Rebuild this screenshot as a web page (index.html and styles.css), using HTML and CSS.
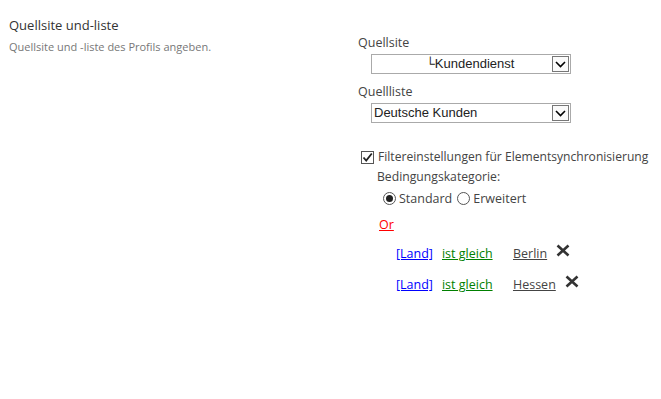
FILE: index.html
```html
<html>

<head>
    <title>Quellsite und-liste</title>
    <meta name="viewport" content="width=device-width, initial-scale=1.0">
    <link rel="stylesheet" href="styles.css">
</head>

<body>
    <div id="section">
        <div id="intro">
            <h3 class="title">Quellsite und-liste</h3>
            <div class="desc">Quellsite und -liste des Profils angeben.</div>
        </div>
        <div id="fields">
            <div class="label">Quellsite</div>
            <div class="select">
                <span class="value centered">&#9492;Kundendienst</span>
                <span class="arrow"><svg width="11" height="7" viewBox="0 0 11 7"><path d="M1 1 L5.5 5.5 L10 1" fill="none" stroke="#000" stroke-width="1.6"/></svg></span>
            </div>
            <div class="label">Quellliste</div>
            <div class="select">
                <span class="value">Deutsche Kunden</span>
                <span class="arrow"><svg width="11" height="7" viewBox="0 0 11 7"><path d="M1 1 L5.5 5.5 L10 1" fill="none" stroke="#000" stroke-width="1.6"/></svg></span>
            </div>

            <div class="check-row">
                <span class="checkbox"><svg width="11" height="11" viewBox="0 0 11 11"><path d="M1.5 5.5 L4.2 8.5 L9.8 1.5" fill="none" stroke="#222" stroke-width="1.8"/></svg></span>
                <span>Filtereinstellungen für Elementsynchronisierung</span>
            </div>
            <div class="filter">
                <div class="cat">Bedingungskategorie:</div>
                <div class="radios">
                    <span class="radio on"></span><span class="radio-label">Standard</span>
                    <span class="radio"></span><span class="radio-label">Erweitert</span>
                </div>
                <a class="or" href="#">Or</a>
                <div class="rules">
                    <div class="rule">
                        <a class="field" href="#">[Land]</a>
                        <a class="op" href="#">ist gleich</a>
                        <a class="val" href="#">Berlin</a>
                        <span class="del"><svg width="14" height="13" viewBox="0 0 14 13"><path d="M1.5 1.5 L12.5 11.5 M12.5 1.5 L1.5 11.5" stroke="#333" stroke-width="2.6"/></svg></span>
                    </div>
                    <div class="rule">
                        <a class="field" href="#">[Land]</a>
                        <a class="op" href="#">ist gleich</a>
                        <a class="val" href="#">Hessen</a>
                        <span class="del"><svg width="14" height="13" viewBox="0 0 14 13"><path d="M1.5 1.5 L12.5 11.5 M12.5 1.5 L1.5 11.5" stroke="#333" stroke-width="2.6"/></svg></span>
                    </div>
                </div>
            </div>
        </div>
    </div>
</body>

</html>
```

FILE: styles.css
```css
body {
    margin: 0;
    font-family: "Open Sans", "Noto Sans", sans-serif;
    font-size: 12px;
    color: #444;
    background: white;
}

#section {
    display: flex;
}

#intro {
    width: 349px;
    padding: 15px 0 0 9px;
}

.title {
    margin: 0;
    font-size: 13px;
    font-weight: normal;
    color: #333;
    line-height: 20px;
}

.desc {
    margin-top: 4px;
    font-size: 11px;
    color: #777;
    line-height: 16px;
}

#fields {
    padding-top: 33px;
}

.label {
    line-height: 20px;
    font-size: 12.5px;
}

.select {
    display: flex;
    width: 198px;
    height: 18px;
    margin: 1px 0 8px 13px;
    border: 1px solid #aaa;
    font-family: "Liberation Sans", Arial, sans-serif;
    font-size: 13px;
    color: #222;
}

.value {
    flex: 1;
    line-height: 18px;
    padding-left: 2px;
}

.value.centered {
    text-align: center;
    padding-left: 16px;
}

.arrow {
    width: 15px;
    margin: 1px 1px 1px 0;
    border: 1px solid #777;
    display: flex;
    align-items: center;
    justify-content: center;
    background: #fafafa;
}

.check-row {
    display: flex;
    align-items: center;
    margin-top: 24px;
    margin-left: 3px;
    line-height: 20px;
    font-size: 12.1px;
}

.checkbox {
    width: 11px;
    height: 11px;
    border: 1px solid #555;
    margin-right: 4px;
    display: flex;
}

.filter {
    padding-left: 19px;
    font-size: 12.5px;
}

.cat {
    line-height: 20px;
    font-size: 12.2px;
}

.radios {
    display: flex;
    align-items: center;
    height: 22px;
    padding-left: 6px;
}

.radio {
    width: 11px;
    height: 11px;
    border: 1px solid #555;
    border-radius: 50%;
    display: inline-flex;
    align-items: center;
    justify-content: center;
    margin-right: 3px;
}

.radio.on:after {
    content: "";
    width: 7px;
    height: 7px;
    border-radius: 50%;
    background: #222;
}

.radio-label {
    margin-right: 5px;
}

.or {
    display: inline-block;
    margin: 6px 0 0 2px;
    color: red;
    line-height: 20px;
}

.rules {
    padding-top: 3px;
}

.rule {
    display: flex;
    align-items: center;
    padding-left: 19px;
    height: 31px;
}

.rule a {
    line-height: 20px;
}

.field {
    color: blue;
    margin-right: 9px;
}

.op {
    color: green;
    width: 71px;
}

.val {
    color: #444;
    margin-right: 9px;
}

.del {
    display: flex;
    margin-top: -6px;
}
```
